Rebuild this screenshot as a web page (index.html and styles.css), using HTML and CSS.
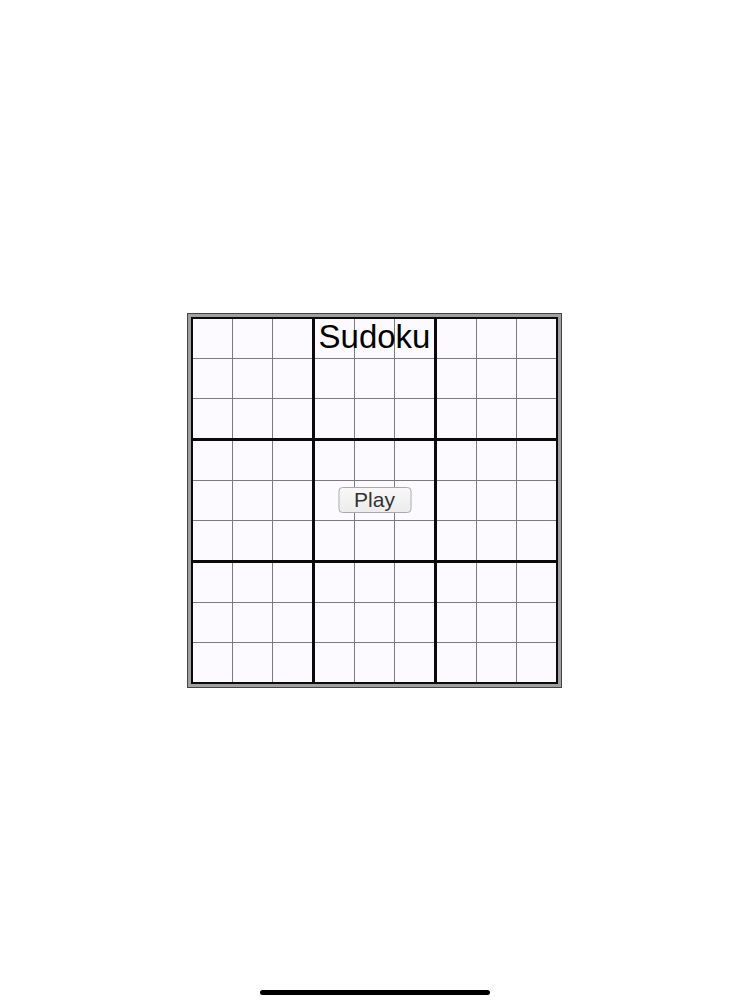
FILE: index.html
```html
<!DOCTYPE html>
<html>
<head>
<meta charset="utf-8">
<link rel="stylesheet" href="styles.css">
</head>
<body>
<div class="page">
  <div class="frame">
    <div class="board">
      <div class="box"><div class="cell"></div><div class="cell"></div><div class="cell"></div><div class="cell"></div><div class="cell"></div><div class="cell"></div><div class="cell"></div><div class="cell"></div><div class="cell"></div></div>
      <div class="box"><div class="cell"></div><div class="cell"></div><div class="cell"></div><div class="cell"></div><div class="cell"></div><div class="cell"></div><div class="cell"></div><div class="cell"></div><div class="cell"></div></div>
      <div class="box"><div class="cell"></div><div class="cell"></div><div class="cell"></div><div class="cell"></div><div class="cell"></div><div class="cell"></div><div class="cell"></div><div class="cell"></div><div class="cell"></div></div>
      <div class="box"><div class="cell"></div><div class="cell"></div><div class="cell"></div><div class="cell"></div><div class="cell"></div><div class="cell"></div><div class="cell"></div><div class="cell"></div><div class="cell"></div></div>
      <div class="box"><div class="cell"></div><div class="cell"></div><div class="cell"></div><div class="cell"></div><div class="cell"></div><div class="cell"></div><div class="cell"></div><div class="cell"></div><div class="cell"></div></div>
      <div class="box"><div class="cell"></div><div class="cell"></div><div class="cell"></div><div class="cell"></div><div class="cell"></div><div class="cell"></div><div class="cell"></div><div class="cell"></div><div class="cell"></div></div>
      <div class="box"><div class="cell"></div><div class="cell"></div><div class="cell"></div><div class="cell"></div><div class="cell"></div><div class="cell"></div><div class="cell"></div><div class="cell"></div><div class="cell"></div></div>
      <div class="box"><div class="cell"></div><div class="cell"></div><div class="cell"></div><div class="cell"></div><div class="cell"></div><div class="cell"></div><div class="cell"></div><div class="cell"></div><div class="cell"></div></div>
      <div class="box"><div class="cell"></div><div class="cell"></div><div class="cell"></div><div class="cell"></div><div class="cell"></div><div class="cell"></div><div class="cell"></div><div class="cell"></div><div class="cell"></div></div>
    </div>
    <h1 class="title">Sudoku</h1>
    <button class="play">Play</button>
  </div>
  <div class="home-indicator"></div>
</div>
</body>
</html>
```

FILE: styles.css
```css
html, body {
  margin: 0;
  padding: 0;
  background: #ffffff;
}

.page {
  position: relative;
  width: 750px;
  height: 1000px;
  display: flex;
  align-items: center;
  justify-content: center;
  font-family: "Liberation Sans", Arial, sans-serif;
}

.frame {
  position: relative;
  border: 1px solid #444444;
  background: #a0a0a0;
  padding: 3px;
  margin-left: -1px;
}

.board {
  display: grid;
  grid-template-columns: repeat(3, 119px);
  grid-template-rows: repeat(3, 119px);
  gap: 3px;
  background: #0a0a0a;
  border: 2px solid #0a0a0a;
}

.box {
  display: grid;
  grid-template-columns: repeat(3, 39px);
  grid-template-rows: repeat(3, 39px);
  gap: 1px;
  background: #7a7a7a;
}

.cell {
  background: #fcfaff;
}

.title {
  position: absolute;
  top: 4px;
  left: 0;
  right: 0;
  margin: 0;
  text-align: center;
  font-size: 33px;
  font-weight: normal;
  color: #000000;
  line-height: 38px;
}

.play {
  position: absolute;
  left: 50%;
  top: 50%;
  transform: translate(-50%, -50%);
  width: 73px;
  height: 26px;
  padding: 0;
  border: 1px solid #a9a9a9;
  border-radius: 4px;
  background: linear-gradient(#f8f8f8, #ececec);
  font-family: "Liberation Sans", Arial, sans-serif;
  font-size: 21px;
  line-height: 24px;
  color: #333333;
}

.home-indicator {
  position: absolute;
  left: 260px;
  top: 990px;
  width: 230px;
  height: 5px;
  border-radius: 3px;
  background: #000000;
}
```
